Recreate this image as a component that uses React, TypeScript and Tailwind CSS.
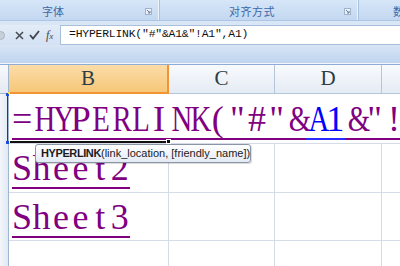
import React from 'react';

const FORMULA = '=HYPERLINK("#"&A1&"!A1",A1)';
const WIDE = 'HYRNKAEL&';

// 宋体-like monospaced rendering: every char gets the same pitch
function BigText({ text, blue = [] }: { text: string; blue?: number[] }) {
  return (
    <span className="inline-flex whitespace-nowrap font-['Liberation_Serif',serif] text-[36px] leading-[38px]">
      {text.split('').map((ch, i) => {
        const isBlue = blue.includes(i);
        return (
          <span
            key={i}
            className={
              isBlue
                ? 'inline-block w-[19.6px] text-center text-[#0000ff] border-b-2 border-[#2a2aff]'
                : 'inline-block w-[19.6px] text-center text-[#800080] border-b-2 border-[#800080]'
            }
          >
            <span className={WIDE.includes(ch) ? 'inline-block scale-x-[0.8]' : 'inline-block'}>{ch}</span>
          </span>
        );
      })}
    </span>
  );
}

function Launcher() {
  return (
    <svg width="7" height="7" viewBox="0 0 7 7">
      <rect x="0.5" y="0.5" width="6" height="6" fill="#e9f0f9" stroke="#9fb3cc" />
      <path d="M2 2 L5 5 M5 3 L5 5 L3 5" stroke="#6d7f96" strokeWidth="1" fill="none" />
    </svg>
  );
}

function RowHead() {
  return <div className="w-[9px] shrink-0 bg-gradient-to-r from-[#f3f6fb] to-[#e2e9f3] border-r border-[#9eb6ce]" />;
}

export default function App() {
  return (
    <div className="relative w-[400px] h-[266px] overflow-hidden bg-white font-['Liberation_Sans',sans-serif]">
      {/* ribbon group labels */}
      <div className="flex h-[21px] bg-gradient-to-b from-[#d7e6f8] to-[#c3d8f1] border-b border-[#aec6e6] text-[11px] text-[#3d68a8] font-['Noto_Sans_CJK_SC',sans-serif]">
        <div className="flex w-[159px] shrink-0 items-center pt-[3px] pl-[42px] pr-[6px] border-r border-[#eef4fb]">
          <span>字体</span>
          <span className="ml-auto flex"><Launcher /></span>
        </div>
        <div className="flex w-[199px] shrink-0 items-center pt-[3px] pl-[69px] pr-[6px] border-l border-[#a9c1e0] border-r border-r-[#eef4fb]">
          <span className="tracking-[0.5px]">对齐方式</span>
          <span className="ml-auto flex"><Launcher /></span>
        </div>
        <div className="flex flex-1 items-center pt-[3px] pl-[34px] border-l border-[#a9c1e0]">
          <span>数</span>
        </div>
      </div>
      <div className="h-[4px] bg-[#d9e6f6]" />

      {/* formula bar */}
      <div className="flex h-[20px] bg-gradient-to-b from-[#e3ecf8] to-[#d3e1f3]">
        <div className="relative flex w-[60px] shrink-0 items-center">
          <div className="absolute left-[-4px] top-[6px] w-[9px] h-[9px] rounded-full bg-[#c7cfd9] border border-[#aab5c2]" />
          <svg width="9" height="9" viewBox="0 0 9 9" className="ml-[15px]">
            <path d="M1 1 L8 8 M8 1 L1 8" stroke="#4a4f57" strokeWidth="1.6" />
          </svg>
          <svg width="11" height="10" viewBox="0 0 11 10" className="ml-[5px]">
            <path d="M1 5 L4 8.5 L10 1" stroke="#3e434a" strokeWidth="1.8" fill="none" />
          </svg>
          <span className="ml-[6px] font-['Liberation_Serif',serif] italic text-[12px] leading-none text-[#3f4652]">
            f<span className="text-[9px]">x</span>
          </span>
        </div>
        <div className="flex flex-1 items-center bg-white border-y border-l border-[#a8bfdc] pl-[8px] font-['Liberation_Mono',monospace] text-[11.4px] tracking-[-0.2px] text-[#111]">
          {FORMULA}
        </div>
      </div>

      <div className="h-[18px] bg-gradient-to-b from-[#d8e5f6] to-[#bfd4ee]" />
      <div className="h-[1px] bg-[#f3f7fc]" />
      <div className="h-[1px] bg-[#8eacd4]" />

      {/* column headers */}
      <div className="flex h-[29px] font-['Liberation_Serif',serif] text-[21px] text-[#2d3c44]">
        <div className="w-[9px] shrink-0 bg-gradient-to-b from-[#f7f9fc] to-[#e4eaf3] border-r border-b border-[#9eb6ce]" />
        <div className="flex w-[160px] shrink-0 items-center justify-center bg-gradient-to-b from-[#fbdca8] to-[#f6c778] border-r-2 border-b-2 border-[#f29436]">B</div>
        <div className="flex w-[106px] shrink-0 items-center justify-center bg-gradient-to-b from-[#f8fafd] to-[#e5ebf4] border-r border-b border-[#b5c6db]">C</div>
        <div className="flex w-[107px] shrink-0 items-center justify-center bg-gradient-to-b from-[#f8fafd] to-[#e5ebf4] border-r border-b border-[#b5c6db]">D</div>
        <div className="flex-1 bg-gradient-to-b from-[#f8fafd] to-[#e5ebf4] border-b border-[#b5c6db]" />
      </div>

      {/* row 1: formula being edited, overflows across C, D, E */}
      <div className="flex h-[49px]">
        <RowHead />
        <div className="flex-1 overflow-hidden pl-[3px] pt-[6px]">
          <BigText text={FORMULA} blue={[15, 16, 24, 25]} />
        </div>
      </div>

      {[{ t: 'Sheet2', h: 'h-[49px]' }, { t: 'Sheet3', h: 'h-[48px]' }, { t: '', h: 'h-[40px]' }].map((r, i) => (
        <div key={i} className={`flex ${r.h}`}>
          <RowHead />
          <div className="w-[160px] shrink-0 border-t border-r border-[#d5dce7] pl-[3px] pt-[5px]">
            {r.t && <BigText text={r.t} />}
          </div>
          <div className="w-[106px] shrink-0 border-t border-r border-[#d5dce7]" />
          <div className="w-[107px] shrink-0 border-t border-r border-[#d5dce7]" />
          <div className="flex-1 border-t border-[#d5dce7]" />
        </div>
      ))}

      {/* A1 reference highlight (column A edge) */}
      <div className="absolute left-[7px] top-[94px] w-[1px] h-[49px] bg-[#2233aa]" />
      <div className="absolute left-[6px] top-[93px] w-[3px] h-[3px] bg-[#1c4fd8]" />
      <div className="absolute left-[6px] top-[141px] w-[3px] h-[3px] bg-[#1c4fd8]" />
      <div className="absolute left-[8px] top-[92px] w-[2px] h-[2px] bg-[#f5e04a]" />

      {/* active cell bottom border + fill handle */}
      <div className="absolute left-[10px] top-[141px] w-[158px] h-[2px] bg-[#111]" />
      <div className="absolute left-[166px] top-[139px] w-[5px] h-[5px] bg-[#111] border border-white" />

      {/* function tooltip */}
      <div className="absolute left-[35px] top-[144px] w-[216px] h-[19px] flex items-center pl-[5px] rounded-[3px] border border-[#8a96a6] bg-gradient-to-b from-white to-[#e4eaf4] shadow-[1px_1px_1px_rgba(0,0,0,0.15)] text-[11px] text-[#1b1b1b] whitespace-nowrap">
        <span className="font-bold tracking-[-0.4px]">HYPERLINK</span>
        <span>(link_location, [friendly_name])</span>
      </div>
    </div>
  );
}
